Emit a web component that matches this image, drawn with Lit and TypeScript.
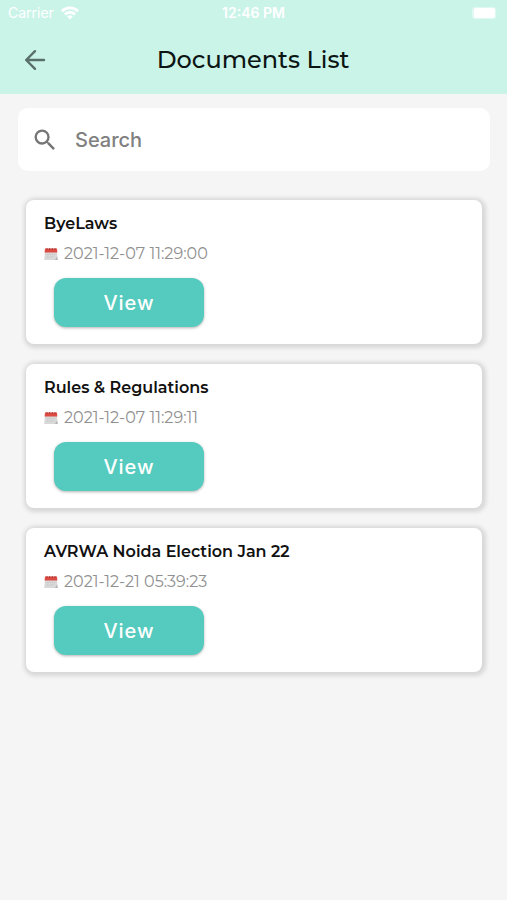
import { LitElement, html, css } from "lit";
import { customElement, property, state } from "lit/decorators.js";

interface DocumentItem {
  title: string;
  date: string;
}

const DOCUMENTS: DocumentItem[] = [
  { title: "ByeLaws", date: "2021-12-07 11:29:00" },
  { title: "Rules & Regulations", date: "2021-12-07 11:29:11" },
  { title: "AVRWA Noida Election Jan 22", date: "2021-12-21 05:39:23" },
];

@customElement("status-bar")
class StatusBar extends LitElement {
  static styles = css`
    :host {
      display: grid;
      grid-template-columns: 1fr auto 1fr;
      align-items: center;
      height: 26px;
      padding: 0 8px;
      color: #fff;
      font: 400 14px/20px Inter, "Liberation Sans", sans-serif;
    }
    .carrier {
      display: flex;
      align-items: center;
      gap: 7px;
    }
    .time {
      font-weight: 600;
    }
    .battery {
      justify-self: end;
    }
    svg {
      display: block;
    }
  `;

  render() {
    return html`
      <span class="carrier">
        Carrier
        <svg width="18" height="14" viewBox="0 0 18 14" fill="none" stroke="#fff" stroke-width="2.8" aria-hidden="true">
          <path d="M1 5.2a11.4 11.4 0 0 1 16 0" />
          <path d="M4 8.4a7.1 7.1 0 0 1 10 0" />
          <path d="M6.2 10.6a4 4 0 0 1 5.6 0L9 13.6z" fill="#fff" stroke="none" />
        </svg>
      </span>
      <span class="time">12:46 PM</span>
      <svg class="battery" width="28" height="14" viewBox="0 0 28 14" aria-hidden="true">
        <rect x="1" y="1" width="24" height="12" rx="3" fill="#fff" opacity="0.4" />
        <rect x="3" y="2" width="21" height="10" rx="2" fill="#fff" />
        <path d="M26 5q1.5 2 0 4z" fill="#fff" opacity="0.4" />
      </svg>
    `;
  }
}

@customElement("document-card")
class DocumentCard extends LitElement {
  @property() heading = "";
  @property() date = "";

  static styles = css`
    :host {
      display: block;
      padding: 12px 18px 17px;
      border-radius: 8px;
      background: #fff;
      box-shadow: 1px 1px 4px 3px rgba(0, 0, 0, 0.12);
    }
    .title {
      margin: 0;
      color: #111;
      font-size: 16px;
      font-weight: 600;
      line-height: 24px;
    }
    .date {
      display: flex;
      align-items: center;
      gap: 6px;
      margin: 6px 0 12px;
      color: #909090;
      font-size: 16px;
      line-height: 24px;
    }
    .view {
      display: block;
      width: 150px;
      height: 49px;
      margin-left: 10px;
      padding: 0;
      border: 0;
      border-radius: 12px;
      background: #54cbbe;
      box-shadow: 0 1px 3px rgba(0, 0, 0, 0.3);
      color: #fff;
      font: 500 20px/24px Inter, "Liberation Sans", sans-serif;
      letter-spacing: 1px;
      cursor: pointer;
    }
  `;

  render() {
    return html`
      <h2 class="title">${this.heading}</h2>
      <p class="date">
        <svg width="14" height="14" viewBox="0 0 14 14" aria-hidden="true">
          <path d="M1 4h12l.6 9H.2z" fill="#d8d8d8" />
          <path d="M11 13 13.2 9.6l.5 3.4z" fill="#b4b4b4" />
          <path d="M3 7.5h8M3 10h7" stroke="#c6c6c6" stroke-width="1" stroke-dasharray="1.4 1" />
          <path d="M1 1.6h12l.3 4H.6z" fill="#dc4a42" />
          <path d="M3 1v1.8M5.7 1v1.8M8.3 1v1.8M11 1v1.8" stroke="#a23a35" stroke-width=".9" />
        </svg>
        <time>${this.date}</time>
      </p>
      <button class="view" type="button" aria-label="View ${this.heading}">View</button>
    `;
  }
}

@customElement("app-root")
class AppRoot extends LitElement {
  @state() private query = "";

  static styles = css`
    :host {
      display: block;
      min-height: 100vh;
      background: #f5f5f5;
      font-family: Montserrat, Inter, "Liberation Sans", sans-serif;
    }
    .header {
      background: #cbf4e9;
    }
    .toolbar {
      display: grid;
      grid-template-columns: 32px 1fr 32px;
      align-items: center;
      height: 68px;
      padding: 0 20px 0 19px;
    }
    .back {
      display: grid;
      place-items: center;
      width: 32px;
      height: 32px;
      padding: 0;
      border: 0;
      background: none;
      cursor: pointer;
    }
    .heading {
      margin: 0;
      color: #0b1513;
      font-size: 24px;
      font-weight: 500;
      line-height: 32px;
      text-align: center;
    }
    .search {
      display: flex;
      align-items: center;
      gap: 16px;
      height: 63px;
      margin: 14px 17px 0 18px;
      padding: 0 13px;
      border-radius: 10px;
      background: #fff;
    }
    .search svg {
      flex: none;
    }
    .input {
      flex: 1;
      min-width: 0;
      padding: 0;
      border: 0;
      outline: 0;
      background: none;
      color: #333;
      font: 500 20px/24px Inter, "Liberation Sans", sans-serif;
    }
    .input::placeholder {
      color: #808080;
      opacity: 1;
    }
    .list {
      display: grid;
      gap: 20px;
      margin: 0;
      padding: 29px 25px 30px 26px;
      list-style: none;
    }
  `;

  private onInput(event: Event) {
    this.query = (event.target as HTMLInputElement).value;
  }

  render() {
    const query = this.query.toLowerCase();
    const items = DOCUMENTS.filter((item) => item.title.toLowerCase().includes(query));
    return html`
      <header class="header">
        <status-bar></status-bar>
        <div class="toolbar">
          <button class="back" type="button" aria-label="Back">
            <svg width="22" height="22" viewBox="0 0 22 22" fill="none" stroke="#587069" stroke-width="2.4" stroke-linecap="round" stroke-linejoin="round" aria-hidden="true">
              <path d="M20 11H2.2M11 2.2 2.2 11l8.8 8.8" />
            </svg>
          </button>
          <h1 class="heading">Documents List</h1>
        </div>
      </header>
      <main>
        <label class="search">
          <svg width="28" height="28" viewBox="0 0 24 24" fill="#757575" aria-hidden="true">
            <path d="M15.5 14h-.79l-.28-.27A6.47 6.47 0 0 0 16 9.5 6.5 6.5 0 1 0 9.5 16c1.61 0 3.09-.59 4.23-1.57l.27.28v.79l5 4.99L20.49 19zm-6 0a4.5 4.5 0 1 1 0-9 4.5 4.5 0 0 1 0 9z" />
          </svg>
          <input class="input" type="text" placeholder="Search" aria-label="Search" .value=${this.query} @input=${this.onInput} />
        </label>
        <ul class="list">
          ${items.map(
            (item) => html`<li><document-card .heading=${item.title} .date=${item.date}></document-card></li>`
          )}
        </ul>
      </main>
    `;
  }
}
